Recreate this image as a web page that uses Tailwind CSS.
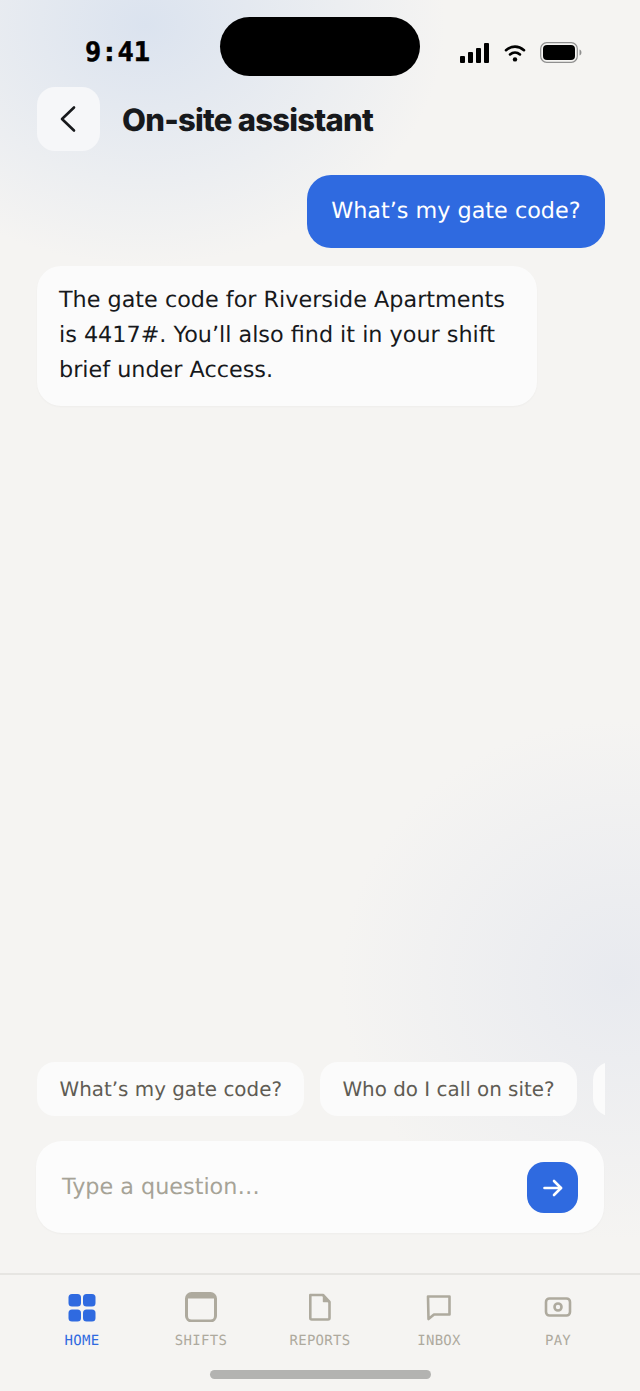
<!DOCTYPE html>
<html lang="en">
<head>
  <meta charset="UTF-8">
  <meta name="viewport" content="width=device-width, initial-scale=1.0">
  <title>On-site assistant</title>
  <script src="https://cdn.jsdelivr.net/npm/@tailwindcss/browser@4"></script>
</head>
<body class="bg-[#f5f4f2] font-['DejaVu_Sans',sans-serif] [text-rendering:geometricPrecision]">
  <div class="relative flex flex-col w-[640px] h-[1391px] overflow-hidden bg-[#f5f4f2]">
    <!-- background glows -->
    <div class="absolute left-[-155px] top-[-215px] w-[600px] h-[480px] rounded-full bg-[radial-gradient(closest-side,#dbe3ef,#dbe3ef00)]"></div>
    <div class="absolute left-[340px] top-[720px] w-[560px] h-[520px] rounded-full bg-[radial-gradient(closest-side,#e8eaef,#e8eaef00)]"></div>

    <!-- Dynamic island -->
    <div class="absolute left-[220px] top-[17px] w-[200px] h-[59px] rounded-full bg-black"></div>

    <!-- Status bar -->
    <div class="relative flex items-center justify-between h-[87px] pl-[85px] pr-[58px] pt-[18px]">
      <span class="font-['DejaVu_Sans_Mono',monospace] text-[27px] font-bold leading-none text-black [-webkit-text-stroke:0.5px_black]">9:41</span>
      <div class="flex items-center gap-[14px]">
        <svg width="29" height="20" viewBox="0 0 29 20" fill="#000" class="mr-[1px]">
          <rect x="0" y="13" width="5" height="7" rx="1"/>
          <rect x="8" y="9" width="5" height="11" rx="1"/>
          <rect x="16" y="5" width="5" height="15" rx="1"/>
          <rect x="24" y="0" width="5" height="20" rx="1"/>
        </svg>
        <svg width="22" height="18" viewBox="0 0 22 18" fill="none" stroke="#000" stroke-width="2.6" stroke-linecap="round">
          <path d="M2 6.2C7.5 1.4 14.5 1.4 20 6.2"/>
          <path d="M6 10.4C9 7.9 13 7.9 16 10.4"/>
          <circle cx="11" cy="15.4" r="2.2" fill="#000" stroke="none"/>
        </svg>
        <svg width="42" height="21" viewBox="0 0 42 21">
          <rect x="0.7" y="0.7" width="36.6" height="19.6" rx="6" fill="none" stroke="#8f8f8f" stroke-width="1.2"/>
          <rect x="3" y="3" width="32" height="15" rx="4" fill="#000"/>
          <path d="M39.5 7.5C41 8 41.4 9.2 41.4 10.5C41.4 11.8 41 13 39.5 13.5Z" fill="#8f8f8f"/>
        </svg>
      </div>
    </div>

    <!-- Header -->
    <header class="relative flex items-center gap-[22px] px-[37px]">
      <button class="flex items-center justify-center w-[63px] h-[64px] rounded-[18px] bg-[#f6f7f9]">
        <svg width="20" height="28" viewBox="0 0 20 28" fill="none" stroke="#17191c" stroke-width="2.6" stroke-linecap="round" stroke-linejoin="round" class="mr-[2px]">
          <path d="M16 2.5L4 14L16 25.5"/>
        </svg>
      </button>
      <h1 class="font-['Inter',sans-serif] text-[31px] font-extrabold leading-none tracking-[-0.75px] text-[#17191c] mt-[2px]">On-site assistant</h1>
    </header>

    <!-- Conversation -->
    <main class="relative flex flex-col flex-1 pr-[35px] pt-[24px] pl-[37px]">
      <div class="self-end flex items-center h-[73px] pb-[1px] px-[24.5px] rounded-[24px] bg-[#2f6ae0] text-white text-[22.3px] leading-none">What’s my gate code?</div>
      <div class="mt-[18px] w-[500px] h-[140px] px-[22px] pt-[17px] rounded-[24px] bg-[#fbfbfb] shadow-[0_1px_2px_rgba(0,0,0,0.03)] text-[#17191c] text-[22.3px] leading-[35px]">
        <p>The gate code for Riverside Apartments is 4417#. You’ll also find it in your shift brief under Access.</p>
      </div>
    </main>

    <!-- Suggested questions -->
    <div class="relative flex gap-[15.5px] ml-[37px] w-[568px] overflow-hidden">
      <span class="shrink-0 flex items-center h-[54px] pt-[2px] px-[22.5px] rounded-[18px] bg-[#fbfbfb] text-[#5f5c54] text-[19.9px] leading-none">What’s my gate code?</span>
      <span class="shrink-0 flex items-center h-[54px] pt-[2px] px-[22.5px] rounded-[18px] bg-[#fbfbfb] text-[#5f5c54] text-[19.9px] leading-none">Who do I call on site?</span>
      <span class="shrink-0 w-[60px] h-[54px] rounded-[18px] bg-[#fbfbfb]"></span>
    </div>

    <!-- Input -->
    <div class="relative flex items-center justify-between mt-[25px] mx-[36px] h-[92px] pl-[26px] pr-[26px] rounded-[26px] bg-[#fcfcfc] shadow-[0_1px_2px_rgba(0,0,0,0.03)]">
      <span class="text-[22.3px] leading-none text-[#a6a397]">Type a question…</span>
      <button class="flex items-center justify-center w-[51px] h-[51px] rounded-[17px] bg-[#2f6ae0]">
        <svg width="22" height="20" viewBox="0 0 22 20" fill="none" stroke="#fff" stroke-width="2.6" stroke-linecap="round" stroke-linejoin="round" class="mt-[2px]">
          <path d="M2.5 10H19"/>
          <path d="M12 3L19 10L12 17"/>
        </svg>
      </button>
    </div>

    <!-- Bottom nav -->
    <nav class="relative grid grid-cols-5 mt-[40px] h-[118px] border-t-2 border-[#e6e5e2] px-[22.5px] pt-[17px] font-['DejaVu_Sans_Mono',monospace] text-[14px] leading-none tracking-[0.3px] text-[#aeaa9e]">
      <a class="flex flex-col items-center text-[#2f6ae0]">
        <svg width="30" height="30" viewBox="0 0 30 30" fill="#2f6ae0">
          <rect x="1.5" y="2" width="12.5" height="12.5" rx="3.5"/>
          <rect x="16" y="2" width="12.5" height="12.5" rx="3.5"/>
          <rect x="1.5" y="17.5" width="12.5" height="12" rx="3.5"/>
          <rect x="16" y="17.5" width="12.5" height="12" rx="3.5"/>
        </svg>
        <span class="mt-[12px]">HOME</span>
      </a>
      <a class="flex flex-col items-center">
        <svg width="32" height="30" viewBox="0 0 32 30" fill="none" stroke="#aeaa9e" stroke-width="3">
          <rect x="1.5" y="1.5" width="29" height="27.5" rx="5"/>
          <path d="M2 4.5H30" stroke-width="4"/>
        </svg>
        <span class="mt-[12px]">SHIFTS</span>
      </a>
      <a class="flex flex-col items-center">
        <svg width="30" height="30" viewBox="0 0 30 30" fill="none" stroke="#aeaa9e" stroke-width="2.6" stroke-linejoin="round">
          <path d="M5.3 3H18L24.5 10V26A1.5 1.5 0 0 1 23 27.5H6.8A1.5 1.5 0 0 1 5.3 26Z"/>
          <path d="M18.5 4V9.5H24" stroke-width="1.4" fill="#aeaa9e"/>
        </svg>
        <span class="mt-[12px]">REPORTS</span>
      </a>
      <a class="flex flex-col items-center">
        <svg width="30" height="30" viewBox="0 0 30 30" fill="none" stroke="#aeaa9e" stroke-width="2.6" stroke-linejoin="round">
          <path d="M4 4.5H25.5V22.5H10L4.5 27Z"/>
        </svg>
        <span class="mt-[12px]">INBOX</span>
      </a>
      <a class="flex flex-col items-center">
        <svg width="30" height="30" viewBox="0 0 30 30" fill="none" stroke="#aeaa9e" stroke-width="2.6">
          <rect x="3" y="6.5" width="24" height="17" rx="3.5"/>
          <circle cx="15" cy="15" r="3.5"/>
        </svg>
        <span class="mt-[12px]">PAY</span>
      </a>
    </nav>

    <!-- Home indicator -->
    <div class="absolute left-[210px] bottom-[12px] w-[221px] h-[9px] rounded-full bg-[#b3b3b1]"></div>
  </div>
</body>
</html>
